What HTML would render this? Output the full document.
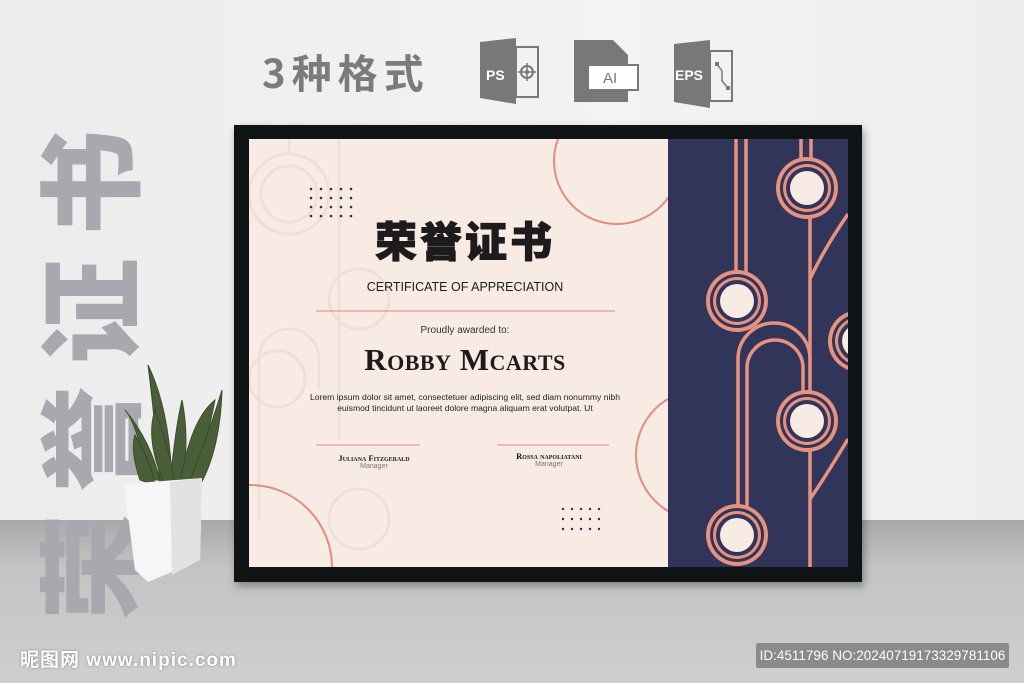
<!DOCTYPE html>
<html><head><meta charset="utf-8"><style>
body{margin:0;width:1024px;height:683px;overflow:hidden;position:relative;font-family:"Liberation Sans","Noto Sans CJK SC",sans-serif;background:#efefee}
.wall{position:absolute;left:0;top:0;width:1024px;height:520px;background:linear-gradient(90deg,#ececec,#f3f3f2 60%,#eeeeed)}
.floor{position:absolute;left:0;top:520px;width:1024px;height:163px;background:linear-gradient(180deg,#a9a9a9,#c4c4c4 30%,#cfcfcf)}
.big{position:absolute;left:-165px;top:315px;width:500px;height:110px;transform:rotate(-90deg);font-size:106px;font-weight:900;color:#a7a9ae;letter-spacing:22px;line-height:110px;font-family:"Noto Sans CJK SC",sans-serif;white-space:nowrap;text-align:center}
.fmt{position:absolute;left:262px;top:46px;font-size:40px;font-weight:bold;color:#7a7b7d;letter-spacing:6px;font-family:"Noto Sans CJK SC",sans-serif;line-height:50px}
.frame{position:absolute;left:234px;top:125px;width:628px;height:457px;background:#0f1416;box-shadow:2px 4px 8px rgba(0,0,0,.35)}
.cert{position:absolute;left:249px;top:139px;width:599px;height:428px;background:#f8ebe3;overflow:hidden}
.t{position:absolute;text-align:center;color:#1d1b1b}
.wm{position:absolute;left:20px;top:645px;color:#fff;font-size:19px;font-weight:bold;letter-spacing:1px;text-shadow:0 0 2px #777}
.id{position:absolute;left:756px;top:643px;width:253px;height:25px;background:#8a8a8a;border-radius:2px;color:#fff;font-size:13.5px;line-height:25px;text-align:center}
</style></head><body>
<div class="wall"></div><div class="floor"></div>
<div class="big">荣誉证书</div>
<div class="fmt">3种格式</div>
<svg style="position:absolute;left:470px;top:38px" width="300" height="70">
 <path d="M10 4 L46 0 V66 L10 60Z" fill="#777879"/><rect x="46" y="9" width="22" height="50" fill="none" stroke="#777879" stroke-width="2"/>
 <text x="16" y="42" font-family="Liberation Sans" font-weight="bold" font-size="14" fill="#fff">PS</text>
 <circle cx="57" cy="34" r="6" fill="none" stroke="#777879" stroke-width="2"/><circle cx="57" cy="34" r="2" fill="#777879"/><path d="M57 25V43M48 34H66" stroke="#777879" stroke-width="1.5"/>
 <path d="M104 2 H143 L158 17 V64 H104Z" fill="#777879"/><rect x="118" y="27" width="50" height="25" fill="#fff" stroke="#777879" stroke-width="2"/>
 <text x="133" y="45" font-family="Liberation Sans" font-size="15" fill="#777879">AI</text>
 <path d="M204 6 L240 2 V70 L204 64Z" fill="#777879"/><rect x="240" y="13" width="22" height="50" fill="none" stroke="#777879" stroke-width="2"/>
 <text x="205" y="42" font-family="Liberation Sans" font-weight="bold" font-size="14" fill="#fff">EPS</text>
 <path d="M247 26 L252 33 L252 43 L258 50" stroke="#777879" stroke-width="1.5" fill="none"/><rect x="245" y="24" width="4" height="4" fill="#777879"/><rect x="256" y="48" width="4" height="4" fill="#777879"/>
</svg>
<div class="frame"></div>
<div class="cert">
<svg width="599" height="428" style="position:absolute;left:0;top:0">
 <g fill="none" stroke="#efe0d7" stroke-width="3">
  <circle cx="40" cy="55" r="40"/><circle cx="40" cy="55" r="28"/><line x1="40" y1="0" x2="40" y2="15"/><line x1="90" y1="0" x2="90" y2="300"/>
  <circle cx="110" cy="160" r="30"/><circle cx="110" cy="380" r="30"/><circle cx="28" cy="240" r="28"/>
  <path d="M10 380 V220 A30 30 0 0 1 70 220 V250"/>
 </g>
 <g fill="#2d2f4d">
  <circle cx="62" cy="50" r="1.3"/><circle cx="72" cy="50" r="1.3"/><circle cx="82" cy="50" r="1.3"/><circle cx="92" cy="50" r="1.3"/><circle cx="102" cy="50" r="1.3"/>
  <circle cx="62" cy="59" r="1.3"/><circle cx="72" cy="59" r="1.3"/><circle cx="82" cy="59" r="1.3"/><circle cx="92" cy="59" r="1.3"/><circle cx="102" cy="59" r="1.3"/>
  <circle cx="62" cy="68" r="1.3"/><circle cx="72" cy="68" r="1.3"/><circle cx="82" cy="68" r="1.3"/><circle cx="92" cy="68" r="1.3"/><circle cx="102" cy="68" r="1.3"/>
  <circle cx="62" cy="77" r="1.3"/><circle cx="72" cy="77" r="1.3"/><circle cx="82" cy="77" r="1.3"/><circle cx="92" cy="77" r="1.3"/><circle cx="102" cy="77" r="1.3"/>
  <circle cx="314" cy="370" r="1.2"/><circle cx="323" cy="370" r="1.2"/><circle cx="332" cy="370" r="1.2"/><circle cx="341" cy="370" r="1.2"/><circle cx="350" cy="370" r="1.2"/>
  <circle cx="314" cy="380" r="1.2"/><circle cx="323" cy="380" r="1.2"/><circle cx="332" cy="380" r="1.2"/><circle cx="341" cy="380" r="1.2"/><circle cx="350" cy="380" r="1.2"/>
  <circle cx="314" cy="390" r="1.2"/><circle cx="323" cy="390" r="1.2"/><circle cx="332" cy="390" r="1.2"/><circle cx="341" cy="390" r="1.2"/><circle cx="350" cy="390" r="1.2"/>
 </g>
 <g fill="none" stroke="#e38c80" stroke-width="2">
  <circle cx="368" cy="22" r="63"/><circle cx="1" cy="428" r="82"/><circle cx="452" cy="316" r="65"/>
 </g>
 <line x1="67" y1="172" x2="366" y2="172" stroke="#e8808a" stroke-width="1"/>
 <line x1="67" y1="306" x2="171" y2="306" stroke="#e38c80" stroke-width="1"/>
 <line x1="248" y1="306" x2="360" y2="306" stroke="#e38c80" stroke-width="1"/>
 <rect x="419" y="0" width="180" height="428" fill="#32355a"/>
 <g fill="none" stroke="#e6927f" stroke-width="3.5">
  <line x1="487" y1="0" x2="487" y2="133"/><line x1="497" y1="0" x2="497" y2="133"/>
  <line x1="552" y1="0" x2="552" y2="20"/><line x1="562" y1="0" x2="562" y2="20"/>
  <line x1="561" y1="78" x2="561" y2="428"/>
  <path d="M599 75 Q575 110 561 140"/><path d="M599 300 Q575 340 561 360"/>
  <path d="M489 408 V220 A36 36 0 0 1 561 220"/>
  <path d="M498 408 V229 A28 28 0 0 1 554 229 V255"/>
 </g>
 <g>
  <g transform="translate(558,49)"><circle r="31" fill="#e6927f"/><circle r="27" fill="#32355a"/><circle r="24" fill="#e6927f"/><circle r="21" fill="#32355a"/><circle r="17" fill="#f8ebe3"/></g>
  <g transform="translate(488,162)"><circle r="31" fill="#e6927f"/><circle r="27" fill="#32355a"/><circle r="24" fill="#e6927f"/><circle r="21" fill="#32355a"/><circle r="17" fill="#f8ebe3"/></g>
  <g transform="translate(558,282)"><circle r="31" fill="#e6927f"/><circle r="27" fill="#32355a"/><circle r="24" fill="#e6927f"/><circle r="21" fill="#32355a"/><circle r="17" fill="#f8ebe3"/></g>
  <g transform="translate(488,396)"><circle r="31" fill="#e6927f"/><circle r="27" fill="#32355a"/><circle r="24" fill="#e6927f"/><circle r="21" fill="#32355a"/><circle r="17" fill="#f8ebe3"/></g>
  <g transform="translate(610,202)"><circle r="31" fill="#e6927f"/><circle r="27" fill="#32355a"/><circle r="24" fill="#e6927f"/><circle r="21" fill="#32355a"/><circle r="17" fill="#f8ebe3"/></g>
 </g>
</svg>
<div class="t" style="left:0;width:432px;top:76px;font-size:42px;font-weight:900;font-family:'Noto Sans CJK SC',sans-serif;letter-spacing:3px;line-height:50px;-webkit-text-stroke:1px #1d1b1b">荣誉证书</div>
<div class="t" style="left:0;width:432px;top:141px;font-size:12.5px">CERTIFICATE OF APPRECIATION</div>
<div class="t" style="left:0;width:432px;top:186px;font-size:10px;color:#333">Proudly awarded to:</div>
<div class="t" style="left:0;width:432px;top:203px;font-size:31px;font-family:'Liberation Serif',serif;font-weight:bold;font-variant:small-caps;letter-spacing:0.5px">Robby Mcarts</div>
<div class="t" style="left:0;width:432px;top:253px;font-size:8.6px;line-height:11px;color:#222">Lorem ipsum dolor sit amet, consectetuer adipiscing elit, sed diam nonummy nibh<br>euismod tincidunt ut laoreet dolore magna aliquam erat volutpat. Ut</div>
<div class="t" style="left:60px;width:130px;top:314px;font-size:8.5px;font-family:'Liberation Serif',serif;font-weight:bold;font-variant:small-caps">Juliana Fitzgerald</div>
<div class="t" style="left:60px;width:130px;top:324px;font-size:7px;color:#777">Manager</div>
<div class="t" style="left:235px;width:130px;top:312px;font-size:8.5px;font-family:'Liberation Serif',serif;font-weight:bold;font-variant:small-caps">Rossa napoliatani</div>
<div class="t" style="left:235px;width:130px;top:322px;font-size:7px;color:#777">Manager</div>
</div>
<svg style="position:absolute;left:110px;top:360px" width="120" height="230">
 <g fill="#4a5e39" stroke="#3a4c2c" stroke-width="1">
  <path d="M40 120 Q25 60 15 50 Q40 80 50 120Z"/><path d="M50 125 Q45 60 38 5 Q60 50 62 125Z"/>
  <path d="M60 125 Q65 70 72 40 Q80 80 72 125Z"/><path d="M70 125 Q80 60 105 40 Q95 90 82 125Z"/>
  <path d="M78 125 Q100 70 112 30 Q110 90 90 125Z"/><path d="M30 120 Q20 90 25 75 Q40 100 45 125Z"/>
  <path d="M55 125 Q35 80 45 50 Q60 90 65 125Z"/>
 </g>
 <path d="M14 124 L92 118 L90 200 L38 222 L25 210Z" fill="#f6f6f6"/>
 <path d="M60 122 L92 118 L90 200 L62 215Z" fill="#e2e2e2"/>
</svg>
<div class="wm"><span style="font-family:'Noto Sans CJK SC',sans-serif">昵图网</span> www.nipic.com</div>
<div class="id">ID:4511796 NO:20240719173329781106</div>
</body></html>
